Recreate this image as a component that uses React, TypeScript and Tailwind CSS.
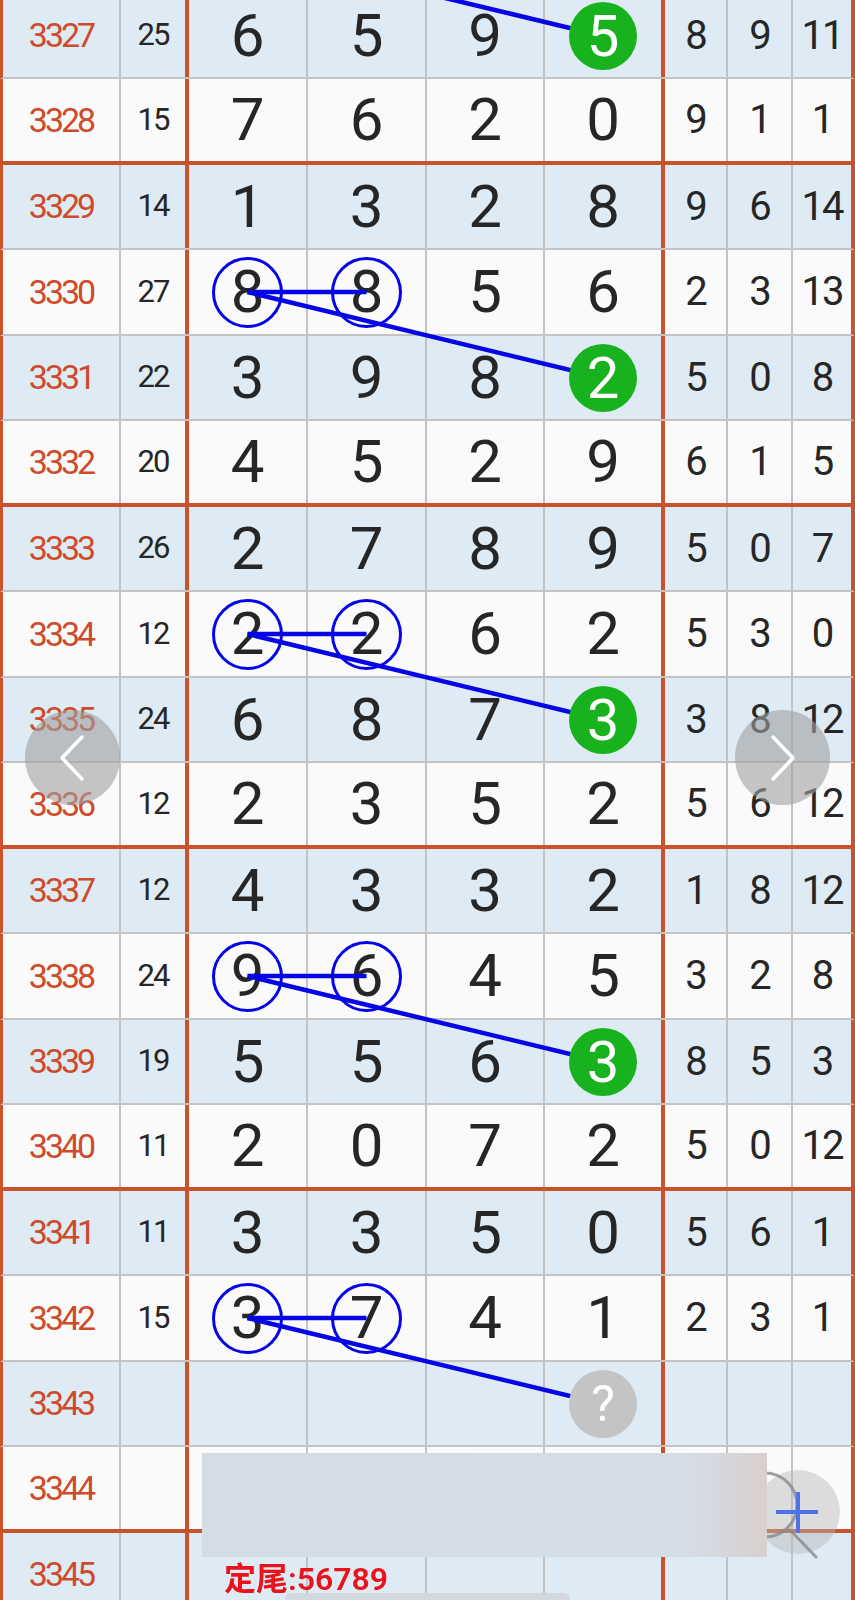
import React from "react";

type Row = {
  period: number;
  sum?: number;
  digits?: number[];
  right?: number[];
};

const rows: Row[] = [
  { period: 3327, sum: 25, digits: [6, 5, 9, 5], right: [8, 9, 11] },
  { period: 3328, sum: 15, digits: [7, 6, 2, 0], right: [9, 1, 1] },
  { period: 3329, sum: 14, digits: [1, 3, 2, 8], right: [9, 6, 14] },
  { period: 3330, sum: 27, digits: [8, 8, 5, 6], right: [2, 3, 13] },
  { period: 3331, sum: 22, digits: [3, 9, 8, 2], right: [5, 0, 8] },
  { period: 3332, sum: 20, digits: [4, 5, 2, 9], right: [6, 1, 5] },
  { period: 3333, sum: 26, digits: [2, 7, 8, 9], right: [5, 0, 7] },
  { period: 3334, sum: 12, digits: [2, 2, 6, 2], right: [5, 3, 0] },
  { period: 3335, sum: 24, digits: [6, 8, 7, 3], right: [3, 8, 12] },
  { period: 3336, sum: 12, digits: [2, 3, 5, 2], right: [5, 6, 12] },
  { period: 3337, sum: 12, digits: [4, 3, 3, 2], right: [1, 8, 12] },
  { period: 3338, sum: 24, digits: [9, 6, 4, 5], right: [3, 2, 8] },
  { period: 3339, sum: 19, digits: [5, 5, 6, 3], right: [8, 5, 3] },
  { period: 3340, sum: 11, digits: [2, 0, 7, 2], right: [5, 0, 12] },
  { period: 3341, sum: 11, digits: [3, 3, 5, 0], right: [5, 6, 1] },
  { period: 3342, sum: 15, digits: [3, 7, 4, 1], right: [2, 3, 1] },
  { period: 3343 },
  { period: 3344 },
  { period: 3345 },
];

// rows whose first two digits are ringed, the next row gets the green ball
const ringRows = [3, 7, 11, 15];
const ballRows = [0, 4, 8, 12];

const COLS = [
  "w-[118px] border-r-2 border-r-[#c3c3c3]",
  "w-[68px] border-r-4 border-r-[#c8532d]",
  "w-[119px] border-r-2 border-r-[#c3c3c3]",
  "w-[119px] border-r-2 border-r-[#c3c3c3]",
  "w-[118px] border-r-2 border-r-[#c3c3c3]",
  "w-[120px] border-r-4 border-r-[#c8532d]",
  "w-[63px] border-r-2 border-r-[#c3c3c3]",
  "w-[65px] border-r-2 border-r-[#c3c3c3]",
  "w-[58px]",
];

const rowHeight = (i: number) => (i % 2 === 0 ? 85 : 86);
const rowTop = (i: number) => 85 * i + Math.floor(i / 2);
const rowCenter = (i: number) => rowTop(i) + 42;

const X1 = 247.5;
const X2 = 366.5;
const XB = 603;

function Lines() {
  const links = [-1, ...ringRows];
  return (
    <svg
      className="absolute inset-0 z-[5] pointer-events-none overflow-visible"
      width="855"
      height="100%"
    >
      {links.map((r) => {
        const y1 = r < 0 ? rowCenter(0) - 85.5 : rowCenter(r);
        const y2 = r < 0 ? rowCenter(0) : rowCenter(r + 1);
        return (
          <g key={r} stroke="#0505e6" strokeWidth="4.5">
            <line x1={X1} y1={y1} x2={X2} y2={y1} />
            <line x1={X1} y1={y1} x2={XB} y2={y2} />
          </g>
        );
      })}
    </svg>
  );
}

function Digit({ value, ring, ball }: { value: number; ring?: boolean; ball?: boolean }) {
  if (ball) {
    return (
      <div className="relative z-10 w-[68px] h-[68px] rounded-full bg-[#17b21d] text-white flex items-center justify-center text-[58px] leading-none">
        {value}
      </div>
    );
  }
  if (ring) {
    return (
      <div className="w-[71px] h-[71px] rounded-full border-[3.5px] border-[#0505e6] flex items-center justify-center text-[60px] leading-none text-[#262626]">
        {value}
      </div>
    );
  }
  return <span className="text-[60px] leading-none text-[#262626]">{value}</span>;
}

function TableRow({ row, i }: { row: Row; i: number }) {
  const blue = row.period % 2 === 1;
  const groupEnd = row.period % 4 === 0;
  const ring = ringRows.includes(i);
  const ball = ballRows.includes(i);

  return (
    <div
      className={`flex shrink-0 border-l-[3px] border-r-4 border-x-[#c8532d] ${
        rowHeight(i) === 85 ? "h-[85px]" : "h-[86px]"
      } ${groupEnd ? "border-b-4 border-b-[#c8532d]" : "border-b-2 border-b-[#c3c3c3]"} ${
        blue ? "bg-[#deebf4]" : "bg-[#fafafa]"
      }`}
    >
      <div className={`${COLS[0]} shrink-0 flex items-center justify-center text-[34px] tracking-[-3px] text-[#cf4a2b]`}>
        {row.period}
      </div>
      <div className={`${COLS[1]} shrink-0 flex items-center justify-center text-[31px] tracking-[-2px] text-[#262626]`}>
        {row.sum}
      </div>
      {[0, 1, 2, 3].map((k) => (
        <div key={k} className={`${COLS[k + 2]} shrink-0 flex items-center justify-center`}>
          {row.digits && (
            <Digit value={row.digits[k]} ring={ring && k < 2} ball={ball && k === 3} />
          )}
          {!row.digits && row.period === 3343 && k === 3 && (
            <div className="relative z-10 w-[68px] h-[68px] rounded-full bg-[#c4c4c4] text-white flex items-center justify-center text-[50px] leading-none">
              ?
            </div>
          )}
        </div>
      ))}
      {[0, 1, 2].map((k) => (
        <div
          key={k}
          className={`${COLS[k + 6]} shrink-0 flex items-center justify-center text-[40px] tracking-[-2px] text-[#262626]`}
        >
          {row.right?.[k]}
        </div>
      ))}
    </div>
  );
}

function NavButton({ side }: { side: "left" | "right" }) {
  return (
    <div
      className={`fixed top-[710px] w-[95px] h-[95px] rounded-full bg-[rgba(160,160,160,0.6)] z-20 ${
        side === "left" ? "left-[25px]" : "left-[735px]"
      }`}
    >
      <svg width="95" height="95" fill="none" stroke="white" strokeWidth="3.5" strokeLinecap="round" strokeLinejoin="round">
        {side === "left" ? (
          <polyline points="57,27 37,48 57,69" />
        ) : (
          <polyline points="38,27 58,48 38,69" />
        )}
      </svg>
    </div>
  );
}

export default function App() {
  return (
    <div className="relative w-[855px] h-[1600px] overflow-hidden bg-[#fafafa] font-['Roboto',sans-serif]">
      <div className="relative flex flex-col -mt-[6px]">
        {rows.map((row, i) => (
          <TableRow key={row.period} row={row} i={i} />
        ))}
        <Lines />
      </div>

      <NavButton side="left" />
      <NavButton side="right" />

      {/* floating zoom button, half under the banner */}
      <div className="fixed left-[756px] top-[1470px] w-[84px] h-[84px] rounded-full bg-[rgba(185,185,185,0.45)] z-20">
        <svg width="84" height="84" className="overflow-visible" fill="none">
          <circle cx="9" cy="35" r="32" stroke="#8a8a8a" strokeWidth="3" opacity="0.8" />
          <line x1="33" y1="59" x2="61" y2="88" stroke="#8a8a8a" strokeWidth="3" opacity="0.8" />
          <line x1="20" y1="42" x2="62" y2="42" stroke="#4f72e6" strokeWidth="4" />
          <line x1="42" y1="22" x2="42" y2="63" stroke="#4f72e6" strokeWidth="4" />
        </svg>
      </div>

      <div className="fixed left-[202px] top-[1453px] w-[565px] h-[104px] z-30 bg-gradient-to-r from-[#d4dde6] via-[#d5dee6] via-85% to-[#d8cfcf]" />

      <div className="fixed left-[224px] top-[1563px] z-30 text-[32px] leading-none font-semibold text-[#e8131b] font-['Roboto','Noto_Sans_CJK_SC',sans-serif]">
        定尾:56789
      </div>

      <div className="fixed left-[285px] top-[1593px] w-[285px] h-[14px] rounded-t-md bg-[#d2d8dd] z-30" />
    </div>
  );
}
